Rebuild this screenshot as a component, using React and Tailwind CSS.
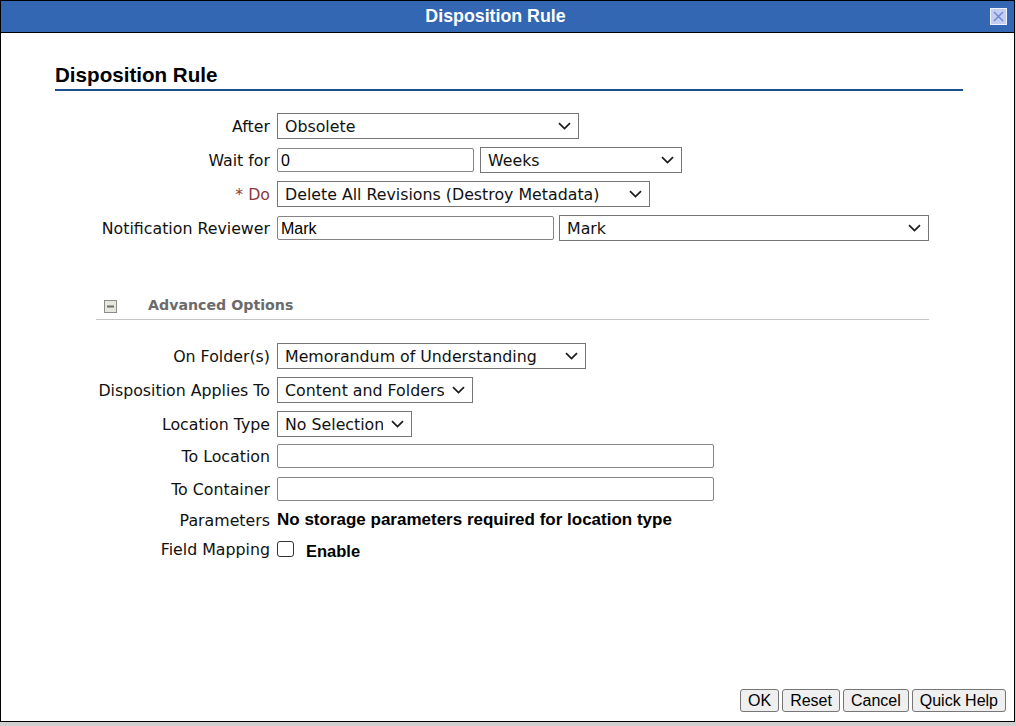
import React from 'react';

const Chevron = () => (
  <svg width="13" height="8" viewBox="0 0 13 8" className="pointer-events-none absolute right-[8px] top-1/2 -translate-y-1/2">
    <path d="M1 1.2 L6.5 6.5 L12 1.2" fill="none" stroke="#1a1a1a" strokeWidth="1.7" />
  </svg>
);

const Select = ({ value, width }) => (
  <div className="relative h-[26px]" style={{ width }}>
    <select
      defaultValue={value}
      className="h-full w-full appearance-none border border-[#767676] bg-white pl-[7px] pr-[28px] pt-[1px] text-[15.8px] text-[#111] font-['DejaVu_Sans',sans-serif] outline-none"
    >
      <option>{value}</option>
    </select>
    <Chevron />
  </div>
);

const TextInput = ({ value = '', width }) => (
  <input
    defaultValue={value}
    style={{ width }}
    className="h-[24px] rounded-[2px] border border-[#858585] bg-white px-[3px] pt-[1px] text-[16px] text-black font-['Liberation_Sans',Arial,sans-serif] outline-none"
  />
);

const Row = ({ label, labelClass = 'text-[#111]', className = 'h-[26px]', children }) => (
  <div className={`flex items-center ${className}`}>
    <div className={`w-[269px] shrink-0 pt-[1px] text-right text-[15.8px] leading-none ${labelClass}`}>{label}</div>
    <div className="ml-[7px] flex items-center">{children}</div>
  </div>
);

const CloseIcon = () => (
  <svg width="17" height="17" viewBox="0 0 17 17">
    <rect x="0.5" y="0.5" width="16" height="16" fill="#c3cdf2" stroke="#eef1ff" />
    <path d="M4 4 L13 13 M13 4 L4 13" stroke="#6b85d3" strokeWidth="1.4" />
  </svg>
);

const MinusIcon = () => (
  <svg width="13" height="13" viewBox="0 0 13 13">
    <rect x="0.5" y="0.5" width="12" height="12" fill="#e6e6de" stroke="#8c8c88" />
    <rect x="3" y="5.5" width="7" height="2" fill="#6f6f6a" />
  </svg>
);

const buttons = ['OK', 'Reset', 'Cancel', 'Quick Help'];

export default function App() {
  return (
    <div className="h-[726px] w-[1016px] bg-[#cfcfcf] font-['DejaVu_Sans',sans-serif]">
      <div className="flex h-[722px] w-[1015px] flex-col border border-black bg-white">
        {/* title bar */}
        <div className="relative flex h-[32px] shrink-0 items-center justify-center border-b border-black bg-[#3366b3] pr-[24px]">
          <span className="text-[17.8px] font-bold text-white font-['Liberation_Sans',Arial,sans-serif]">Disposition Rule</span>
          <div className="absolute right-[7px] top-[7px]">
            <CloseIcon />
          </div>
        </div>

        <div className="flex-1">
          {/* heading */}
          <div className="ml-[54px] mt-[30px] w-[908px] border-b-2 border-[#1c4f8f] pb-[2px]">
            <h1 className="h-[24px] text-[20.6px] font-bold leading-[24px] text-black font-['Liberation_Sans',Arial,sans-serif]">Disposition Rule</h1>
          </div>

          <div className="mt-[22px] flex flex-col gap-[8px]">
            <Row label="After">
              <Select value="Obsolete" width="302px" />
            </Row>
            <Row label="Wait for">
              <TextInput value="0" width="197px" />
              <div className="ml-[6px]">
                <Select value="Weeks" width="202px" />
              </div>
            </Row>
            <Row label="* Do" labelClass="text-[#8b3a3a]">
              <Select value="Delete All Revisions (Destroy Metadata)" width="373px" />
            </Row>
            <Row label="Notification Reviewer">
              <TextInput value="Mark" width="277px" />
              <div className="ml-[5px]">
                <Select value="Mark" width="370px" />
              </div>
            </Row>
          </div>

          {/* advanced options */}
          <div className="ml-[95px] mt-[53px] w-[833px] border-b border-[#c4c4c4] pb-[3px]">
            <div className="flex h-[22px] items-center pt-[2px]">
              <div className="ml-[8px]">
                <MinusIcon />
              </div>
              <span className="ml-[31px] text-[14.2px] font-bold text-[#6b6b6b]">Advanced Options</span>
            </div>
          </div>

          <div className="mt-[23px] flex flex-col gap-[8px]">
            <Row label="On Folder(s)">
              <Select value="Memorandum of Understanding" width="309px" />
            </Row>
            <Row label="Disposition Applies To">
              <Select value="Content and Folders" width="196px" />
            </Row>
            <Row label="Location Type">
              <Select value="No Selection" width="135px" />
            </Row>
          </div>

          <div className="mt-[7px]">
            <Row label="To Location" className="h-[24px]">
              <TextInput width="437px" />
            </Row>
          </div>
          <div className="mt-[9px]">
            <Row label="To Container" className="h-[24px]">
              <TextInput width="437px" />
            </Row>
          </div>
          <div className="mt-[9px]">
            <Row label="Parameters" className="h-[20px]">
              <span className="text-[17px] font-bold text-black font-['Liberation_Sans',Arial,sans-serif]">
                No storage parameters required for location type
              </span>
            </Row>
          </div>
          <div className="mt-[8px]">
            <Row label="Field Mapping" className="h-[22px]">
              <div className="h-[16px] w-[17px] rounded-[3px] border border-[#333] bg-white" />
              <span className="ml-[12px] mt-[4px] text-[16.5px] font-bold text-black font-['Liberation_Sans',Arial,sans-serif]">Enable</span>
            </Row>
          </div>
        </div>

        {/* footer buttons */}
        <div className="flex justify-end gap-[3px] pb-[9px] pr-[8px]">
          {buttons.map((b) => (
            <button
              key={b}
              className="h-[23px] rounded-[3px] border border-[#767676] bg-[#efefef] px-[7px] text-[16px] leading-none text-black font-['Liberation_Sans',Arial,sans-serif]"
            >
              {b}
            </button>
          ))}
        </div>
      </div>
    </div>
  );
}
